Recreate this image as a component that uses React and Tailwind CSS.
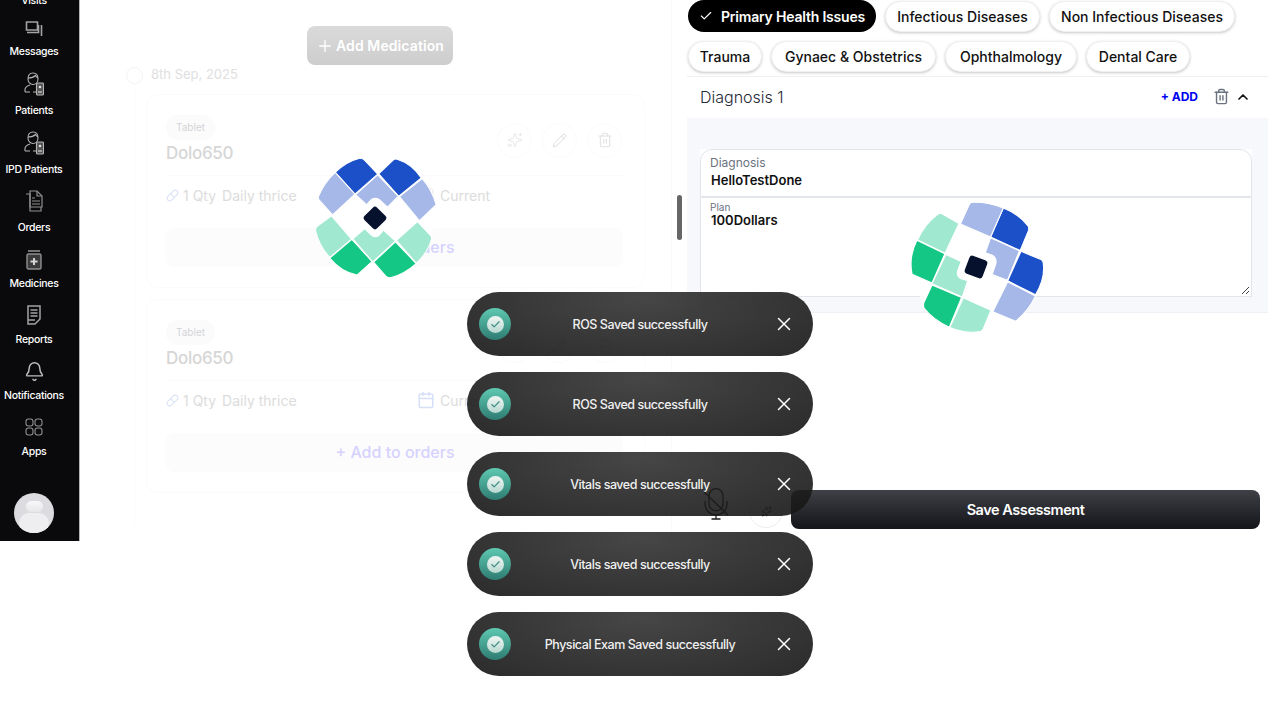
import React from 'react';
import { Plus, Check, X, Trash2, ChevronUp, Sparkles, Pencil, Pill, Calendar, Bell } from 'lucide-react';

const font = { fontFamily: 'Inter, "Noto Sans", sans-serif' };

const MessagesIcon = () => (
    <svg width="18" height="18" viewBox="0 0 18 18" fill="none" stroke="#a3a3a3" strokeWidth="1.6">
        <path d="M1.5 2h11v8h-11z" />
        <path d="M2 12.5h11.5V5M16.5 5v11" />
    </svg>
);

const PatientIcon = () => (
    <svg width="20" height="24" viewBox="0 0 20 24" fill="none" stroke="#b5b5b5" strokeWidth="1.1">
        <path d="M4 7c0-4 1.5-6 5-6s5 2 5 6c0 3-2 5.500-5 5.500S4 10 4 7z" />
        <path d="M4 6c3 0 6-1 7.500-2.500 .5 1 1.500 2 2.500 2.500" />
        <path d="M1 20v-2.500c0-2 2-3.500 5-4.500M6 20H1M9 20h3" />
        <rect x="12.500" y="11" width="7" height="12" rx="1" fill="#555" />
        <circle cx="16" cy="15" r="1.300" fill="#ddd" stroke="none" />
        <path d="M14 20h4" stroke="#ddd" />
    </svg>
);

const OrdersIcon = () => (
    <svg width="18" height="22" viewBox="0 0 18 22" fill="none" stroke="#8f8f8f" strokeWidth="1.2">
        <path d="M5 1h7l5 5v11H5z" />
        <path d="M12 1v5h5" />
        <path d="M1 4h4v17h11v-4" />
        <path d="M7 8h3M7 11h8M7 14h8" />
    </svg>
);

const MedicineIcon = () => (
    <svg width="16" height="20" viewBox="0 0 16 20" fill="none">
        <path d="M2 1h12" stroke="#8f8f8f" strokeWidth="1.6" />
        <rect x="1" y="4" width="14" height="15" rx="1.500" fill="#3c3c3c" stroke="#8f8f8f" strokeWidth="1.400" />
        <path d="M8 8v7M4.500 11.500h7" stroke="#d4d4d4" strokeWidth="2" />
    </svg>
);

const ReportIcon = () => (
    <svg width="16" height="20" viewBox="0 0 16 20" fill="none" stroke="#a3a3a3" strokeWidth="1.500">
        <path d="M2 1h12v13l-5 5H2z" />
        <path d="M4.500 5h7M4.500 8h7M4.500 11h7M2 15h7" />
    </svg>
);

const AppsIcon = () => (
    <svg width="18" height="18" viewBox="0 0 18 18" fill="none" stroke="#8f8f8f" strokeWidth="1.100">
        <rect x="1" y="1" width="7" height="7" rx="2.500" />
        <rect x="10" y="1" width="7" height="7" rx="2.500" />
        <rect x="1" y="10" width="7" height="7" rx="2.500" />
        <rect x="10" y="10" width="7" height="7" rx="2.500" />
    </svg>
);

const MicMuted = () => (
    <svg className="relative z-20 ml-[16px]" width="26" height="32" viewBox="0 0 26 32" fill="none" stroke="#1c1c1c" strokeWidth="1.300">
        <rect x="6" y="0.700" width="14" height="22" rx="7" />
        <path d="M2 13v3a11 11 0 0 0 22 0v-3" />
        <path d="M13 27v4M8.500 31h9" />
        <path d="M1 4l24 23" />
    </svg>
);

const navItems = [
    { label: 'Messages', height: 'h-[51px]', gap: 'gap-[4px]', icon: <MessagesIcon /> },
    { label: 'Patients', height: 'h-[59px]', gap: 'gap-[8px]', icon: <PatientIcon /> },
    { label: 'IPD Patients', height: 'h-[59px]', gap: 'gap-[8px]', icon: <PatientIcon /> },
    { label: 'Orders', height: 'h-[58px]', gap: 'gap-[8px]', icon: <OrdersIcon /> },
    { label: 'Medicines', height: 'h-[56px]', gap: 'gap-[5px]', icon: <MedicineIcon /> },
    { label: 'Reports', height: 'h-[56px]', gap: 'gap-[6px]', icon: <ReportIcon /> },
    { label: 'Notifications', height: 'h-[56px]', gap: 'gap-[6px]', icon: <Bell size={21} color="#bdbdbd" strokeWidth={1.7} /> },
    { label: 'Apps', height: 'h-[56px]', gap: 'gap-[6px]', icon: <AppsIcon /> },
];

const Sidebar = () => (
    <div className="w-[80px] h-[541px] shrink-0 bg-[#0a0a0c] border-r border-[#b5b5b5] overflow-hidden flex flex-col">
        <div className="w-[68px] h-[14px] -mt-[6px] text-center text-[10.5px] leading-[14px] font-medium tracking-[-0.3px] text-white">Visits</div>
        {navItems.map((item) => (
            <div key={item.label} className={`w-[68px] shrink-0 flex flex-col items-center justify-end ${item.height} ${item.gap}`}>
                <div className="h-6 flex items-center justify-center">{item.icon}</div>
                <div className="h-[14px] whitespace-nowrap text-[10.5px] leading-[14px] font-medium tracking-[-0.3px] text-white">{item.label}</div>
            </div>
        ))}
        <div className="w-10 h-10 mt-[34px] ml-[14px] rounded-full bg-[#dcdce0] overflow-hidden flex flex-col items-center">
            <div className="w-[17px] h-[17px] mt-[8px] rounded-full bg-gradient-to-b from-[#f8f8f9] to-[#e6e6e9]"></div>
            <div className="w-[30px] h-[30px] mt-[1px] rounded-full bg-[#eeeef0]"></div>
        </div>
    </div>
);

const MedicationCard = ({ showCalendar }) => (
    <div className="w-[499px] h-[194px] rounded-xl border border-[#fbfbfb] px-[19px] pt-[20px]">
        <div className="flex items-center justify-between">
            <div>
                <div className="w-[49px] h-[25px] rounded-full bg-[#fbfbfb] flex items-center justify-center text-[10px] text-[#d4d4d8]">Tablet</div>
                <div className="mt-[1px] h-6 text-[17px] leading-6 font-medium tracking-[-0.3px] text-[#d6d6d6]">Dolo650</div>
            </div>
            <div className="flex gap-[10px] mr-[3px]">
                <div className="w-[35px] h-[35px] rounded-full border border-[#fbfbfb] flex items-center justify-center"><Sparkles size={16} color="#dcdcdc" strokeWidth={1} /></div>
                <div className="w-[35px] h-[35px] rounded-full border border-[#fbfbfb] flex items-center justify-center"><Pencil size={15} color="#dcdcdc" strokeWidth={1.6} /></div>
                <div className="w-[35px] h-[35px] rounded-full border border-[#fbfbfb] flex items-center justify-center"><Trash2 size={16} color="#e2e2e2" strokeWidth={1.6} /></div>
            </div>
        </div>
        <div className="mt-[10px] h-px bg-[#fbfbfb]"></div>
        <div className="mt-[9px] h-5 flex items-center text-[14px] text-[#dcdcdc]">
            <div className="w-[251px] flex items-center">
                <Pill size={13} color="#dbe2f7" />
                <span className="ml-[4px]">1 Qty</span>
                <span className="ml-[6px]">Daily thrice</span>
            </div>
            <Calendar size={18} color={showCalendar ? '#d5dff8' : '#f0f0f0'} />
            <span className="ml-[5px]">Current</span>
        </div>
        <div className="mt-[23px] w-[457px] h-[39px] pb-[2px] rounded-lg bg-[#fcfcfc] flex items-center justify-center pl-[1px] text-[16px] font-medium text-[#d6d2ff]">+ Add to orders</div>
    </div>
);

const MedicationPane = () => (
    <div className="w-[592px] h-[541px] shrink-0 border-r border-[#fafafa] pt-[26px]">
        <div className="ml-[227px] w-[146px] h-[39px] rounded-lg bg-gradient-to-b from-[#dadada] to-[#cdcdcd] flex items-center justify-center gap-[2px] text-[14px] font-semibold tracking-[0.1px] text-white">
            <Plus size={18} strokeWidth={1.8} />
            <span className="-mt-px">Add Medication</span>
        </div>
        <div className="flex items-center mt-[1px] ml-[46px] h-[18px]">
            <div className="w-[17px] h-[17px] rounded-full border border-[#f3f3f3]"></div>
            <span className="ml-2 text-[13px] text-[#e0e0e0]">8th Sep, 2025</span>
        </div>
        <div className="ml-[54px] pt-[10px] pl-[11px] border-l border-[#fbfbfb] flex flex-col gap-[11px] h-[440px]">
            <MedicationCard />
            <MedicationCard showCalendar />
        </div>
    </div>
);

const chips = [
    { label: 'Infectious Diseases', width: 'w-[155px]' },
    { label: 'Non Infectious Diseases', width: 'w-[186px]' },
    { label: 'Trauma', width: 'w-[74px]' },
    { label: 'Gynaec & Obstetrics', width: 'w-[165px]' },
    { label: 'Ophthalmology', width: 'w-[132px]' },
    { label: 'Dental Care', width: 'w-[104px]' },
];

const AssessmentPane = () => (
    <div className="w-[581px] shrink-0">
        <div className="pl-[1px] flex flex-wrap gap-x-[9px] gap-y-[8px]">
            <div className="w-[188px] h-[32px] rounded-full bg-black flex items-center justify-center gap-2 text-[14px] font-semibold tracking-[-0.2px] text-white">
                <Check size={14} />
                <span>Primary Health Issues</span>
            </div>
            {chips.map((chip) => (
                <div key={chip.label} className={`${chip.width} h-[31px] mt-[1px] rounded-full bg-white border border-[#f0f0f0] shadow-[0_1px_3px_rgba(0,0,0,0.22)] flex items-center justify-center text-[14px] font-medium text-[#111]`}>
                    {chip.label}
                </div>
            ))}
        </div>
        <div className="mt-[4px] h-[42px] border-t border-[#edf0f4] flex items-center pl-[13px] pb-[2px]">
            <span className="text-[16px] font-light text-[#1f2937]">Diagnosis 1</span>
            <span className="ml-auto text-[12px] font-bold text-[#0000f0]">+ ADD</span>
            <Trash2 className="ml-[15px]" size={17} color="#6b7280" />
            <ChevronUp className="ml-[5px] mr-[17px]" size={16} color="#111" strokeWidth={2.5} />
        </div>
        <div className="h-[195px] bg-[#f6f8fb] border-b border-[#edf0f4] px-[13px] pt-[31px]">
            <div className="w-[552px] h-[148px] bg-white">
                <div className="h-[48px] rounded-t-xl border border-[#e2e5ea] pl-[9px] pt-[6px]">
                    <div className="h-[14px] text-[12px] leading-[14px] text-[#6b7280]">Diagnosis</div>
                    <div className="mt-[1px] ml-px text-[13px] leading-[18px] font-semibold text-[#111]">HelloTestDone</div>
                </div>
                <div className="relative h-[100px] border border-[#e2e5ea] pl-[9px] pt-[3px]">
                    <div className="h-[12px] text-[10px] leading-[12px] text-[#6b7280]">Plan</div>
                    <div className="-mt-[2px] ml-px text-[13px] leading-[18px] font-semibold text-[#111]">100Dollars</div>
                    <svg className="absolute right-[1px] bottom-[1px]" width="9" height="9" viewBox="0 0 9 9" stroke="#444" strokeWidth="1">
                        <path d="M1 8l7-7M5 8l3-3" />
                    </svg>
                </div>
            </div>
        </div>
        <div className="mt-[175px] flex items-start">
            <MicMuted />
            <div className="ml-[20px] mt-[6px] w-[34px] h-[34px] rounded-full border border-[#ececec] flex items-center justify-center">
                <Sparkles size={11} color="#111" strokeWidth={1.5} />
            </div>
            <div className="ml-[8px] mt-[2px] w-[469px] h-[39px] pt-px rounded-lg bg-gradient-to-b from-[#404146] to-[#14151a] flex items-center justify-center text-[14.5px] font-semibold tracking-[-0.45px] text-white">
                Save Assessment
            </div>
        </div>
    </div>
);

const toasts = ['ROS Saved successfully', 'ROS Saved successfully', 'Vitals saved successfully', 'Vitals saved successfully', 'Physical Exam Saved successfully'];

const Toasts = () => (
    <div className="absolute z-10 left-[467px] top-[292px] w-[346px] flex flex-col gap-4">
        {toasts.map((text, i) => (
            <div key={i} className="h-16 rounded-full pl-3 pr-[18px] flex items-center bg-[radial-gradient(ellipse_at_50%_10%,rgba(50,50,50,0.9),rgba(20,20,20,0.9))]">
                <div className="w-8 h-8 rounded-full bg-gradient-to-b from-[#5fc9b1] to-[#2e7c72] flex items-center justify-center shrink-0">
                    <div className="w-[17px] h-[17px] rounded-full bg-gradient-to-b from-[#f2f7f5] to-[#b7d8d0] flex items-center justify-center">
                        <Check size={11} color="#3d8b7e" strokeWidth={2.5} />
                    </div>
                </div>
                <div className="flex-1 pt-[2px] pr-[4px] text-center text-[12.5px] font-medium tracking-[-0.45px] text-[#f0f0f0]">{text}</div>
                <X size={22} color="#fff" strokeWidth={1.6} />
            </div>
        ))}
    </div>
);

// traced from the spinner in the screenshot, in 3x pixels around the middle diamond
const Spinner = ({ className, angle, scale }) => (
    <svg className={`absolute z-10 ${className}`} width="150" height="150" viewBox="-75 -75 150 150">
        <g transform={`rotate(${angle}) scale(${scale}) translate(-225 -204)`} stroke="#fff" strokeWidth="3">
            <path d="M108 70L185 28L360 85L405 165L392 262L345 338L265 380L170 372L92 322L50 240L58 145z" fill="#fff" stroke="none" />
            <path d="M108 70Q140 38 180 28Q190 28 195 35L233 75L166 134z" fill="#1c50c8" />
            <path d="M236 74L280 32Q286 29 292 32Q332 44 361 86L295 140z" fill="#1c50c8" />
            <path d="M108 70L166 134L100 195L60 150Q56 145 60 138Q76 100 108 70z" fill="#a5b8e8" />
            <path d="M233 77L293 140L262 172L238 150Q226 142 214 150L200 165L168 135z" fill="#a5b8e8" />
            <path d="M297 141L364 88Q392 120 405 165L356 212z" fill="#a5b8e8" />
            <path d="M97 198L156 266L92 320Q60 285 50 240Q50 232 56 228z" fill="#a0e8cf" />
            <path d="M157 267L216 332L172 372Q125 362 92 322z" fill="#14c784" />
            <path d="M160 265L195 235L214 254Q226 264 238 254L250 240L285 272L218 333z" fill="#a0e8cf" />
            <path d="M285 274L346 338Q310 370 270 380Q262 380 256 374L221 334z" fill="#14c784" />
            <path d="M288 270L350 215L388 255Q394 262 390 270Q380 305 347 337z" fill="#a0e8cf" />
            <rect x="199" y="178" width="52" height="52" rx="9" fill="#06112e" stroke="none" transform="rotate(45 225 204)" />
        </g>
    </svg>
);

const App = () => {
    return (
        <div className="relative w-[1280px] h-[720px] overflow-hidden bg-white flex items-start" style={font}>
            <Sidebar />
            <MedicationPane />
            <div className="w-[15px] shrink-0 pt-[195px] pl-[5px]">
                <div className="w-[5px] h-[45px] rounded-full bg-[#666]"></div>
            </div>
            <AssessmentPane />
            <Toasts />
            <Spinner className="left-[300px] top-[143px]" angle={0} scale={0.34} />
            <Spinner className="left-[901px] top-[192px]" angle={66} scale={0.365} />
        </div>
    );
};

export default App;
